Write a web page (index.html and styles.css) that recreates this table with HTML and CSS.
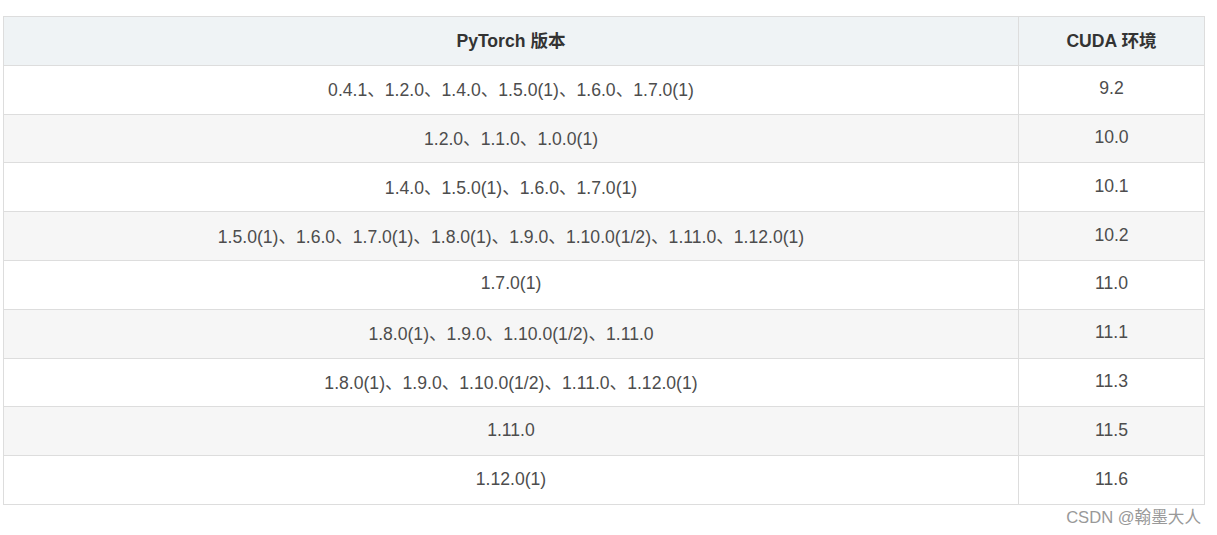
FILE: index.html
```html
<!DOCTYPE html>
<html lang="zh-CN">
<head>
<meta charset="utf-8">
<title>PyTorch CUDA</title>
<link rel="stylesheet" href="styles.css">
</head>
<body>
<div class="page">
  <table class="ver-table">
    <thead>
      <tr><th class="col-a">PyTorch 版本</th><th class="col-b">CUDA 环境</th></tr>
    </thead>
    <tbody>
      <tr><td>0.4.1、1.2.0、1.4.0、1.5.0(1)、1.6.0、1.7.0(1)</td><td>9.2</td></tr>
      <tr><td>1.2.0、1.1.0、1.0.0(1)</td><td>10.0</td></tr>
      <tr><td>1.4.0、1.5.0(1)、1.6.0、1.7.0(1)</td><td>10.1</td></tr>
      <tr><td>1.5.0(1)、1.6.0、1.7.0(1)、1.8.0(1)、1.9.0、1.10.0(1/2)、1.11.0、1.12.0(1)</td><td>10.2</td></tr>
      <tr><td>1.7.0(1)</td><td>11.0</td></tr>
      <tr><td>1.8.0(1)、1.9.0、1.10.0(1/2)、1.11.0</td><td>11.1</td></tr>
      <tr><td>1.8.0(1)、1.9.0、1.10.0(1/2)、1.11.0、1.12.0(1)</td><td>11.3</td></tr>
      <tr><td>1.11.0</td><td>11.5</td></tr>
      <tr><td>1.12.0(1)</td><td>11.6</td></tr>
    </tbody>
  </table>
  <div class="watermark">CSDN @翰墨大人</div>
</div>
</body>
</html>
```

FILE: styles.css
```css
html, body {
  margin: 0;
  padding: 0;
  background: #ffffff;
}

.page {
  padding: 16px 13px 0 3px;
  font-family: "Liberation Sans", Arial, "Noto Sans CJK SC", sans-serif;
}

.ver-table {
  width: 1202px;
  border-collapse: collapse;
  table-layout: fixed;
  font-size: 17.6px;
  color: #4d4d4d;
}

.col-a { width: 1015px; }
.col-b { width: 186px; }

.ver-table th,
.ver-table td {
  border: 1px solid #dddddd;
  text-align: center;
  height: 48.8px;
  padding: 0 8px 2px;
  box-sizing: border-box;
}

.ver-table th {
  background: #eff3f5;
  color: #333333;
  font-weight: bold;
}

.ver-table tbody tr:nth-child(even) td {
  background: #f6f6f6;
}

.watermark {
  display: flex;
  justify-content: flex-end;
  padding-right: 3px;
  margin-top: 2px;
  font-size: 16.6px;
  color: #999999;
  line-height: 22px;
}
```
